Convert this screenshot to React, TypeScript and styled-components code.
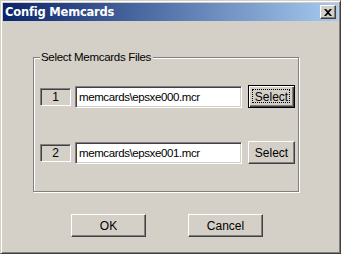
import React from "react";
import styled, { createGlobalStyle, css } from "styled-components";

const Global = createGlobalStyle`
  html, body { margin: 0; padding: 0; background: #d4d0c8; }
  * { box-sizing: border-box; }
`;

const Window = styled.div`
  width: 341px;
  height: 254px;
  display: flex;
  flex-direction: column;
  padding: 2px;
  background: #d4d0c8;
  border: 1px solid;
  border-color: #d4d0c8 #404040 #404040 #d4d0c8;
  box-shadow: inset 1px 1px #fff, inset -1px -1px #808080;
  font-family: "Liberation Sans", Arial, sans-serif;
  font-size: 11px;
  color: #000;
`;

const TitleBar = styled.div`
  height: 18px;
  flex: none;
  display: flex;
  align-items: center;
  justify-content: space-between;
  padding: 0 2px 0 2px;
  background: linear-gradient(to right, #0a246a, #a6caf0);
`;

const Title = styled.span`
  color: #fff;
  font-family: "DejaVu Sans", Tahoma, sans-serif;
  font-weight: bold;
  font-size: 11.5px;
  letter-spacing: -0.2px;
`;

const CloseButton = styled.div`
  width: 16px;
  height: 14px;
  display: flex;
  align-items: center;
  justify-content: center;
  background: #d4d0c8;
  border: 1px solid;
  border-color: #fff #404040 #404040 #fff;
  box-shadow: inset -1px -1px #808080;
`;

const Body = styled.div`
  flex: 1;
  display: flex;
  flex-direction: column;
  padding: 36px 0 0 30px;
`;

const Group = styled.div`
  position: relative;
  width: 266px;
  height: 135px;
  border: 1px solid #808080;
  box-shadow: inset 1px 1px #fff, 1px 1px #fff;
  display: flex;
  flex-direction: column;
  gap: 33px;
  padding: 27px 0 0 6px;
`;

const Legend = styled.span`
  position: absolute;
  left: 6px;
  top: -8px;
  padding: 0 2px 0 1px;
  background: #d4d0c8;
  line-height: 14px;
  font-size: 11.5px;
  letter-spacing: -0.3px;
`;

const Row = styled.div`
  display: flex;
  align-items: center;
  height: 23px;
`;

const NumberBox = styled.div`
  width: 31px;
  height: 18px;
  margin-right: 4px;
  display: flex;
  align-items: center;
  justify-content: center;
  border: 1px solid;
  border-color: #808080 #fff #fff #808080;
  box-shadow: inset 1px 1px #404040, inset -1px -1px #d4d0c8;
  padding-top: 1px;
  font-size: 12px;
`;

const PathInput = styled.div`
  width: 167px;
  height: 22px;
  display: flex;
  align-items: center;
  padding: 1px 0 0 3px;
  background: #fff;
  border: 1px solid;
  border-color: #808080 #fff #fff #808080;
  box-shadow: inset 1px 1px #404040, inset -1px -1px #d4d0c8;
  font-size: 11.5px;
  letter-spacing: -0.4px;
  white-space: nowrap;
  overflow: hidden;
`;

const Button = styled.div<{ $default?: boolean; $w: number }>`
  position: relative;
  width: ${(p) => p.$w}px;
  height: 23px;
  display: flex;
  align-items: center;
  justify-content: center;
  background: #d4d0c8;
  border: 1px solid;
  font-size: 12px;
  ${(p) =>
    p.$default
      ? css`
          border-color: #000;
          box-shadow: inset 1px 1px #fff, inset -1px -1px #404040, inset -2px -2px #808080;
          &::after {
            content: "";
            position: absolute;
            inset: 3px 4px 4px 3px;
            border: 1px dotted #000;
          }
        `
      : css`
          border-color: #fff #404040 #404040 #fff;
          box-shadow: inset -1px -1px #808080;
        `}
`;

const SelectSlot = styled.div`
  margin-left: 6px;
`;

const Footer = styled.div`
  display: flex;
  gap: 42px;
  margin-top: 22px;
  padding-left: 38px;
`;

export default function App() {
  const rows = [
    { n: "1", path: "memcards\\epsxe000.mcr", def: true },
    { n: "2", path: "memcards\\epsxe001.mcr", def: false },
  ];
  return (
    <>
      <Global />
      <Window>
        <TitleBar>
          <Title>Config Memcards</Title>
          <CloseButton>
            <svg width="8" height="7" viewBox="0 0 8 7">
              <path
                d="M0 0h2l2 2 2-2h2L5 3.5 8 7H6L4 5 2 7H0l3-3.5z"
                fill="#000"
              />
            </svg>
          </CloseButton>
        </TitleBar>
        <Body>
          <Group>
            <Legend>Select Memcards Files</Legend>
            {rows.map((r) => (
              <Row key={r.n}>
                <NumberBox>{r.n}</NumberBox>
                <PathInput>{r.path}</PathInput>
                <SelectSlot>
                  <Button $w={47} $default={r.def}>
                    Select
                  </Button>
                </SelectSlot>
              </Row>
            ))}
          </Group>
          <Footer>
            <Button $w={75}>OK</Button>
            <Button $w={75}>Cancel</Button>
          </Footer>
        </Body>
      </Window>
    </>
  );
}
